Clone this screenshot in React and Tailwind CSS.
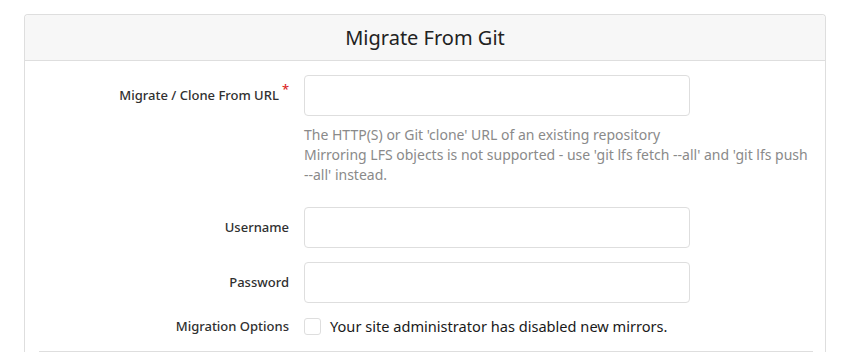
export default function App() {
  const font = { fontFamily: '"Noto Sans", "Open Sans", sans-serif' }
  const input = "w-[386px] h-[41px] border border-[#dedede] rounded-[4px] bg-white px-3 text-sm outline-none"
  const label = "w-[265px] text-right text-[13px] font-medium text-[#303030] pr-[15px] whitespace-nowrap"

  return (
    <div className="w-[850px] h-[352px] bg-white overflow-hidden pt-[14px] pl-[24px]" style={font}>
      <div className="w-[802px] border border-[#dedede] rounded-t-[4px] border-b-0 h-[400px]">
        {/* header */}
        <div className="h-[46px] bg-[#f7f7f7] border-b border-[#dedede] flex items-center justify-center rounded-t-[4px]">
          <span className="text-[20px] text-[#222] font-normal">Migrate From Git</span>
        </div>

        <div className="px-[14px] pt-[14px]">
          {/* URL */}
          <div className="flex items-center">
            <label className={label}>
              Migrate / Clone From URL<span className="text-[#db2828] relative -top-[6px] ml-[3px]">*</span>
            </label>
            <input className={input} />
          </div>
          <div className="ml-[265px] mt-[9px] text-[14px] leading-[20px] text-[#8a8a8a] w-[510px]">
            <div>The HTTP(S) or Git 'clone' URL of an existing repository</div>
            <div>Mirroring LFS objects is not supported - use 'git lfs fetch --all' and 'git lfs push --all' instead.</div>
          </div>

          {/* Username */}
          <div className="flex items-center mt-[22px]">
            <label className={label}>Username</label>
            <input className={input} />
          </div>

          {/* Password */}
          <div className="flex items-center mt-[14px]">
            <label className={label}>Password</label>
            <input type="password" className={input} />
          </div>

          {/* Options */}
          <div className="flex items-center mt-[13px]">
            <label className={label}>Migration Options</label>
            <div className="flex items-center gap-[9px]">
              <span className="w-[17px] h-[17px] border border-[#dedede] rounded-[3px] bg-white"></span>
              <span className="text-[14.6px] text-[#1a1a1a]">Your site administrator has disabled new mirrors.</span>
            </div>
          </div>

          <div className="mt-[13px] border-t border-[#dedede] w-[774px]"></div>
        </div>
      </div>
    </div>
  )
}
